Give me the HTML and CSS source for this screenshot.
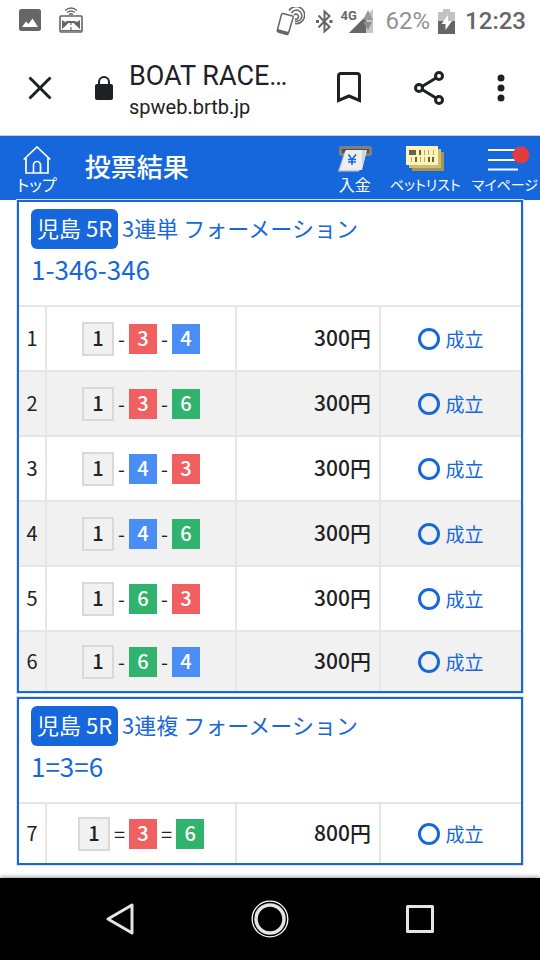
FILE: index.html
```html
<!DOCTYPE html>
<html lang="ja">
<head>
  <meta charset="UTF-8">
  <meta name="viewport" content="width=device-width, initial-scale=1">
  <title>投票結果</title>
  <link rel="stylesheet" href="styles.css">
</head>
<body>
  <!-- ステータスバー -->
  <div class="status">
    <svg width="22" height="22" viewBox="0 0 22 22"><rect width="22" height="22" rx="2.5" fill="#666"/><path d="M3 18l4-5.500 2.500 2.500 4-5.500L19 18z" fill="#fff"/></svg>
    <svg class="drive" width="24" height="26" viewBox="0 0 24 26" fill="none" stroke="#666">
      <path d="M6 3.500q6-5 12 0M8 5.500q4-3 8 0M10 7.500q2-1.500 4 0" stroke-width="1.400"/>
      <rect x="1" y="9" width="22" height="16" rx="1" stroke-width="1.600"/>
      <path d="M3 13l3 2 2-1h8l2 1 3-2v9l-7-6h-4l-7 6z" fill="#666" stroke="none"/>
      <path d="M10 16.500L4 23M14 16.500l6 6.500" stroke="#fff" stroke-width="1.500"/>
      <path d="M12 16v2m0 2v3M2 23.500h20" stroke-width="1.200"/>
    </svg>
    <div class="status-right">
      <svg class="cast" width="29" height="29" viewBox="0 0 29 29" fill="none" stroke="#666">
        <path d="M7 6.500l9.500 2.500q1 .3.700 1.300L12.500 26q-.4 1.400-1.700 1L2 24.600q-1-.3-.7-1.300L5.500 7.500q.4-1.300 1.500-1z" stroke-width="1.500"/>
        <path d="M1.500 22.500l11 3-1 2.500-10-3z" fill="#666"/>
        <path d="M13 3.500a8.500 8.500 0 1 1 6 13M15.500 6a5.500 5.500 0 1 1 3.500 8M18 8a2.500 2.500 0 1 1 1 4" stroke-width="1.600"/>
      </svg>
      <svg width="17" height="25" viewBox="0 0 17 25" fill="none" stroke="#666" stroke-width="2"><path d="M2.500 6.500l11 11.500-5 4.500v-20l5 4.500-11 11.500"/><path d="M0 11h3v3H0zM13.500 11h3v3h-3z" fill="#666" stroke="none"/></svg>
      <div class="signal">
        <span class="net">4G</span>
        <svg width="24" height="24" viewBox="0 0 24 24"><path d="M24 0v24H0z" fill="#c6c6c6"/><path d="M0 24L17 7v17z" fill="#666"/><path d="M14 11l5-10 5 10z" fill="#999"/><path d="M14 13h9l-4 8z" fill="#8d8d8d"/></svg>
      </div>
      <span class="percent">62%</span>
      <svg width="17" height="25" viewBox="0 0 17 25"><path d="M5 0h7v3h5v9H0V3h5z" fill="#c2c2c2"/><path d="M0 12h17v13H0z" fill="#666"/><path d="M10 6l-6.500 9h4v6L14 12h-4z" fill="#fff"/></svg>
      <span class="clock">12:23</span>
    </div>
  </div>

  <!-- ブラウザのツールバー -->
  <div class="toolbar">
    <button class="tool close" aria-label="閉じる"><svg width="24" height="24" viewBox="0 0 24 24" fill="none" stroke="#202124" stroke-width="3"><path d="M1.500 1.500l21 21M22.500 1.500l-21 21"/></svg></button>
    <svg class="lock" width="18" height="24" viewBox="0 0 18 24"><rect y="8" width="18" height="16" rx="2" fill="#202124"/><path d="M4 9V6a5 5 0 0 1 10 0v3" fill="none" stroke="#202124" stroke-width="2"/></svg>
    <div class="site">
      <div class="site-title">BOAT RACE…</div>
      <div class="site-url">spweb.brtb.jp</div>
    </div>
    <div class="tools">
      <button class="tool" aria-label="ブックマーク"><svg width="24" height="31" viewBox="0 0 24 31" fill="none" stroke="#202124" stroke-width="3"><path d="M1.500 28.500V4q0-2.500 2.500-2.500h16q2.500 0 2.500 2.500v24.500L12 24z"/></svg></button>
      <button class="tool" aria-label="共有"><svg width="30" height="34" viewBox="0 0 30 34" fill="none" stroke="#202124" stroke-width="3"><path d="M8 15.500L22 7M8 18.500L22 27"/><circle cx="5" cy="17" r="3.500"/><circle cx="25" cy="5" r="3.500"/><circle cx="25" cy="29" r="3.500"/></svg></button>
      <button class="tool" aria-label="メニュー"><svg width="8" height="28" viewBox="0 0 8 28" fill="#202124"><circle cx="4" cy="4" r="3.500"/><circle cx="4" cy="14" r="3.500"/><circle cx="4" cy="24" r="3.500"/></svg></button>
    </div>
  </div>

  <header class="header">
    <a class="nav top" href="#">
      <svg width="28" height="28" viewBox="0 0 28 28" fill="none" stroke="#fff" stroke-width="1.700"><path d="M.7 13.500L14 1l13.300 12.500M3 12v15h22V12M10.500 27v-8a3.500 3.500 0 0 1 7 0v8"/></svg>
      <span>トップ</span>
    </a>
    <h1>投票結果</h1>
    <nav class="menu">
      <a class="nav deposit" href="#">
        <svg width="34" height="28" viewBox="0 0 34 28">
          <rect x="1" y="0" width="33" height="10" rx="2" fill="#808080"/><rect x="4" y="3" width="27" height="4" fill="#505050"/>
          <path d="M7 5h21l-7 20.500H0z" fill="#ccc"/><path d="M8 4h21l-5 20H2z" fill="#eee"/><path d="M24 4h5l-5 17z" fill="#d4d4d4"/>
          <path d="M10.500 8.500l3.500 5 4-5M14 13.500v5.500M10 13.500h8M10 16h8" fill="none" stroke="#1767dc" stroke-width="1.600"/>
        </svg>
        <span>入金</span>
      </a>
      <a class="nav small" href="#">
        <svg width="38" height="28" viewBox="0 0 38 28">
          <path d="M6 6h32v19H6z" fill="#a4964e"/><path d="M3 3h32v19H3z" fill="#cbbd74"/><path d="M0 0h32v19H0z" fill="#fff3b8"/>
          <path d="M3 4h7v5H3zM13 4h2v5h-2zM9 11h2v5H9zM22 11h2v5h-2zM26 11h2v5h-2z" fill="#655f4d"/>
          <path d="M18 4h1v5h-1zM22 4h1v5h-1zM27 4h1v5h-1zM5 11h1v5H5zM14 11h1v5h-1zM18 11h1v5h-1z" fill="#b4aa80"/>
        </svg>
        <span>ベットリスト</span>
      </a>
      <a class="nav small" href="#">
        <svg width="52" height="28" viewBox="0 0 52 28"><path d="M9 4h31M9 14h31M9 23.500h30" stroke="#fff" stroke-width="2"/><circle cx="42" cy="9" r="8.500" fill="#e43b3b"/></svg>
        <span>マイページ</span>
      </a>
    </nav>
  </header>

  <main class="results">
    <table class="ticket">
      <colgroup>
        <col class="col-no">
        <col class="col-combo">
        <col class="col-yen">
        <col>
      </colgroup>
      <thead>
        <tr>
          <th colspan="4">
            <div class="race"><span class="place">児島 5R</span><span>3連単 フォーメーション</span></div>
            <div class="numbers">1-346-346</div>
          </th>
        </tr>
      </thead>
      <tbody>
        <tr>
          <td class="no">1</td>
          <td class="combo"><div><b class="boat b1">1</b>-<b class="boat b3">3</b>-<b class="boat b4">4</b></div></td>
          <td class="yen">300円</td>
          <td class="state"><div><i class="circle"></i>成立</div></td>
        </tr>
        <tr>
          <td class="no">2</td>
          <td class="combo"><div><b class="boat b1">1</b>-<b class="boat b3">3</b>-<b class="boat b6">6</b></div></td>
          <td class="yen">300円</td>
          <td class="state"><div><i class="circle"></i>成立</div></td>
        </tr>
        <tr>
          <td class="no">3</td>
          <td class="combo"><div><b class="boat b1">1</b>-<b class="boat b4">4</b>-<b class="boat b3">3</b></div></td>
          <td class="yen">300円</td>
          <td class="state"><div><i class="circle"></i>成立</div></td>
        </tr>
        <tr>
          <td class="no">4</td>
          <td class="combo"><div><b class="boat b1">1</b>-<b class="boat b4">4</b>-<b class="boat b6">6</b></div></td>
          <td class="yen">300円</td>
          <td class="state"><div><i class="circle"></i>成立</div></td>
        </tr>
        <tr>
          <td class="no">5</td>
          <td class="combo"><div><b class="boat b1">1</b>-<b class="boat b6">6</b>-<b class="boat b3">3</b></div></td>
          <td class="yen">300円</td>
          <td class="state"><div><i class="circle"></i>成立</div></td>
        </tr>
        <tr>
          <td class="no">6</td>
          <td class="combo"><div><b class="boat b1">1</b>-<b class="boat b6">6</b>-<b class="boat b4">4</b></div></td>
          <td class="yen">300円</td>
          <td class="state"><div><i class="circle"></i>成立</div></td>
        </tr>
      </tbody>
    </table>

    <table class="ticket">
      <colgroup>
        <col class="col-no">
        <col class="col-combo">
        <col class="col-yen">
        <col>
      </colgroup>
      <thead>
        <tr>
          <th colspan="4">
            <div class="race"><span class="place">児島 5R</span><span>3連複 フォーメーション</span></div>
            <div class="numbers">1=3=6</div>
          </th>
        </tr>
      </thead>
      <tbody>
        <tr>
          <td class="no">7</td>
          <td class="combo"><div><b class="boat b1">1</b>=<b class="boat b3">3</b>=<b class="boat b6">6</b></div></td>
          <td class="yen">800円</td>
          <td class="state"><div><i class="circle"></i>成立</div></td>
        </tr>
      </tbody>
    </table>
  </main>

  <!-- 端末のナビゲーション -->
  <footer class="keys">
    <button aria-label="戻る"><svg width="38" height="38" viewBox="0 0 38 38" fill="none" stroke="#e4e4e4" stroke-width="3" stroke-linejoin="round"><path d="M7 19L31 5v28z"/></svg></button>
    <button aria-label="ホーム"><svg width="38" height="38" viewBox="0 0 38 38" fill="none" stroke="#e4e4e4"><circle cx="19" cy="19" r="17.800" stroke-width="1.300" stroke="#fff"/><circle cx="19" cy="19" r="14" stroke-width="3.500"/></svg></button>
    <button aria-label="アプリ履歴"><svg width="38" height="38" viewBox="0 0 38 38" fill="none" stroke="#e4e4e4" stroke-width="3" stroke-linejoin="round"><rect x="6.500" y="6.500" width="25" height="25"/></svg></button>
  </footer>
</body>
</html>
```

FILE: styles.css
```css
* {
  box-sizing: border-box;
}
body {
  display: flex;
  flex-direction: column;
  min-height: 100vh;
  margin: 0;
  background: #fff;
  color: #222;
  font-family: "Noto Sans CJK JP", sans-serif;
}
svg {
  display: block;
  flex: none;
}
button {
  padding: 0;
  border: none;
  background: none;
  cursor: pointer;
}

/* ステータスバー */
.status {
  display: flex;
  align-items: center;
  height: 40px;
  padding: 0 14px 0 19px;
  font-family: Roboto, sans-serif;
  font-size: 24px;
  line-height: 28px;
  color: #666;
}
.drive {
  margin-left: 18px;
}
.status-right {
  display: flex;
  align-items: center;
  gap: 8px;
  margin-left: auto;
  padding-top: 2px;
}
.cast {
  margin-right: 3px;
}
.signal {
  position: relative;
  padding: 0 5px 0 8px;
}
.net {
  position: absolute;
  left: 0;
  top: 0;
  font-size: 13px;
  font-weight: bold;
  line-height: 13px;
}
.percent {
  color: #919191;
}
.clock {
  margin-left: 2px;
  font-weight: 500;
}

/* ツールバー */
.toolbar {
  display: flex;
  align-items: center;
  height: 96px;
  padding: 0 35px 0 28px;
  border-bottom: 1px solid #c8d0d8;
  color: #202124;
  font-family: Roboto, sans-serif;
}
.lock {
  margin-left: 43px;
}
.site {
  margin-left: 16px;
  padding-top: 4px;
}
.site-title {
  font-size: 27px;
  line-height: 34px;
}
.site-url {
  font-size: 20px;
  line-height: 28px;
}
.tools {
  display: flex;
  align-items: center;
  gap: 53px;
  margin-left: auto;
}

/* ヘッダー */
.header {
  display: flex;
  height: 64px;
  background: #1767dc;
  color: #fff;
}
.header h1 {
  margin: 10px 0 0 28px;
  font-size: 26px;
  font-weight: 500;
  line-height: 40px;
}
.nav {
  display: flex;
  flex-direction: column;
  align-items: center;
  padding-top: 10px;
  color: #fff;
  font-size: 16px;
  line-height: 20px;
  font-feature-settings: "palt";
  text-decoration: none;
  white-space: nowrap;
}
.small {
  font-size: 14px;
}
.top {
  margin-left: 17px;
}
.menu {
  display: flex;
  gap: 11px;
  margin-left: auto;
  padding-right: 2px;
}
.deposit {
  margin-right: 7px;
}

/* 投票結果 */
.results {
  flex: 1;
  padding: 0 17px 7px;
}
.ticket {
  width: 100%;
  margin-bottom: 4px;
  border: 2px solid #1767dc;
  border-spacing: 0;
  table-layout: fixed;
  outline: 1px solid #dde3ec;
}
.col-no {
  width: 26px;
}
.col-combo {
  width: 190px;
}
.col-yen {
  width: 144px;
}
.ticket th {
  height: 103px;
  padding: 7px 12px 0;
  color: #1767dc;
  font-size: 22px;
  font-weight: normal;
  text-align: left;
  vertical-align: top;
}
.race {
  display: flex;
  gap: 4px;
  line-height: 36px;
}
.place {
  padding: 0 6px 4px;
  border-radius: 6px;
  background: #1767dc;
  color: #fff;
}
.numbers {
  font-size: 26px;
  line-height: 40px;
}
.ticket td {
  height: 65px;
  padding: 0;
  border-top: 2px solid #e6e6e6;
  border-left: 2px solid #e6e6e6;
}
.ticket tbody tr:nth-child(even) {
  background: #f1f1f1;
}
.ticket tbody tr:last-child td {
  height: 61px;
}
.ticket td.no {
  padding-bottom: 3px;
  border-left: none;
  font-size: 20px;
  text-align: center;
}
.combo div,
.state div {
  display: flex;
  align-items: center;
  justify-content: center;
  gap: 4px;
  font-size: 20px;
}
.ticket .state div {
  gap: 5px;
  font-size: 19px;
}
.boat {
  width: 28px;
  height: 30px;
  color: #fff;
  font-weight: 500;
  line-height: 28px;
  text-align: center;
}
.b1 {
  width: 32px;
  height: 34px;
  border: 2px solid #d9d9d9;
  background: #f1f1f1;
  color: #222;
}
.b3 {
  background: #f16060;
}
.b4 {
  background: #4a8ef5;
}
.b6 {
  background: #2fb36d;
}
.ticket td.yen {
  padding: 0 8px 4px 0;
  font-size: 21px;
  font-weight: 500;
  text-align: right;
}
.state {
  color: #1767dc;
}
.circle {
  width: 22px;
  height: 22px;
  border: 3px solid #1767dc;
  border-radius: 50%;
}

/* 端末のキー */
.keys {
  display: flex;
  align-items: center;
  justify-content: center;
  gap: 112px;
  height: 82px;
  background: #000;
  box-shadow: 0 -1px 4px rgba(0, 0, 0, 0.4);
}
```
